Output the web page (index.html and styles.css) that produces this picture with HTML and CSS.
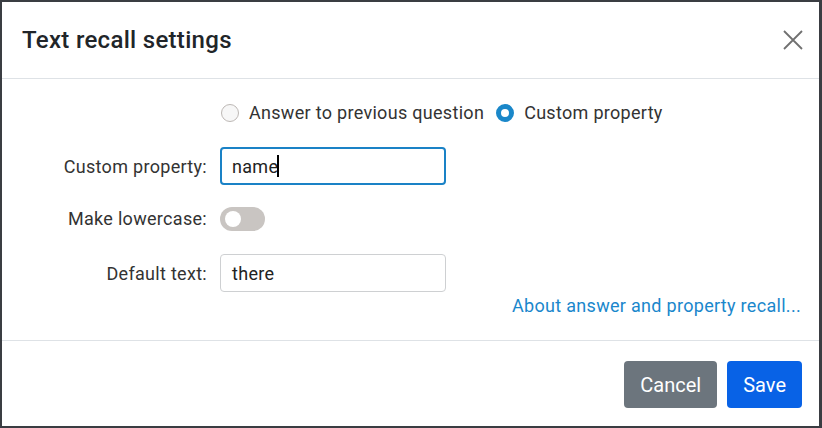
FILE: index.html
```html
<!DOCTYPE html>
<html lang="en">
<head>
<meta charset="utf-8">
<title>Text recall settings</title>
<link rel="stylesheet" href="styles.css">
</head>
<body>
<div class="modal">
  <div class="modal-header">
    <h5 class="modal-title">Text recall settings</h5>
    <button class="close-btn" type="button" aria-label="Close">
      <svg width="20" height="20" viewBox="0 0 20 20"><path d="M1 1 L19 19 M19 1 L1 19" stroke="#707070" stroke-width="1.8" fill="none"/></svg>
    </button>
  </div>
  <div class="modal-body">
    <div class="form-grid">
      <div class="row-radio">
        <label class="radio"><span class="radio-input"></span><span>Answer to previous question</span></label>
        <label class="radio"><span class="radio-input checked"></span><span>Custom property</span></label>
      </div>
      <label class="label row-prop">Custom property:</label>
      <div class="input focused row-prop">name<span class="caret"></span></div>
      <label class="label row-toggle">Make lowercase:</label>
      <div class="row-toggle"><span class="switch"><span class="knob"></span></span></div>
      <label class="label row-default">Default text:</label>
      <div class="input row-default">there</div>
    </div>
    <div class="link-row"><a class="link" href="#">About answer and property recall...</a></div>
  </div>
  <div class="modal-footer">
    <button class="btn btn-secondary" type="button">Cancel</button>
    <button class="btn btn-primary" type="button">Save</button>
  </div>
</div>
</body>
</html>
```

FILE: styles.css
```css
* { box-sizing: border-box; }
html, body { margin: 0; padding: 0; }
body {
  width: 822px;
  height: 428px;
  font-family: Roboto, "Liberation Sans", Arial, sans-serif;
  font-size: 18px;
  line-height: 27px;
  letter-spacing: 0.3px;
  color: #333;
  background: #3a3d42;
}
.modal {
  width: 822px;
  height: 428px;
  border: 2px solid #3a3d42;
  border-right-width: 3px;
  background: #fff;
  display: flex;
  flex-direction: column;
}
.modal-header {
  height: 77px;
  flex: none;
  border-bottom: 1px solid #dee2e6;
  display: flex;
  align-items: center;
  justify-content: space-between;
  padding: 0 16px 0 20px;
}
.modal-title {
  margin: 0;
  font-size: 24px;
  font-weight: 500;
  line-height: 30px;
  color: #212529;
}
.close-btn {
  border: 0;
  background: none;
  padding: 0;
  width: 20px;
  height: 20px;
  display: block;
}
.close-btn svg { display: block; }
.modal-body {
  flex: none;
  padding: 20px 18px 21px 20px;
  border-bottom: 1px solid #dee2e6;
}
.form-grid {
  display: grid;
  grid-template-columns: 185px 226px;
  column-gap: 13px;
  align-items: center;
}
.row-radio {
  grid-column: 2;
  display: flex;
  align-items: center;
  height: 27px;
  margin-bottom: 21px;
  white-space: nowrap;
}
.radio {
  display: flex;
  align-items: center;
  margin-right: 11px;
  flex: none;
}
.radio-input {
  width: 18px;
  height: 18px;
  border-radius: 50%;
  border: 1px solid #bdb8b5;
  background: #f7f7f7;
  margin: 0 10px 0 1px;
  flex: none;
}
.radio-input.checked {
  border: 5px solid #1a87c9;
  background: #fff;
}
.label {
  grid-column: 1;
  text-align: right;
  color: #333;
}
.input {
  grid-column: 2;
  height: 38px;
  border: 1px solid #ced0d2;
  border-radius: 4px;
  padding: 0 11px;
  display: flex;
  align-items: center;
  color: #222;
}
.input.focused {
  border: 2px solid #1a82c6;
  padding: 0 10px;
}
.caret {
  display: inline-block;
  width: 2px;
  height: 22px;
  background: #000;
  margin-left: -1px;
}
.row-prop { margin-bottom: 20px; }
.row-toggle { margin-bottom: 22px; height: 27px; }
div.row-toggle { display: flex; align-items: center; }
.switch {
  width: 45px;
  height: 24px;
  border-radius: 12px;
  background: #c9c5c2;
  display: flex;
  align-items: center;
  padding-left: 5px;
}
.knob {
  width: 16px;
  height: 16px;
  border-radius: 50%;
  background: #fff;
}
.link-row {
  display: flex;
  justify-content: flex-end;
  height: 27px;
  align-items: center;
}
.link {
  color: #1a87cc;
  text-decoration: none;
}
.modal-footer {
  flex: 1;
  display: flex;
  justify-content: flex-end;
  align-items: flex-start;
  gap: 10px;
  padding: 20px 17px 0 0;
}
.btn {
  height: 47px;
  border: 0;
  border-radius: 4px;
  font-family: inherit;
  font-size: 20px;
  letter-spacing: 0;
  padding: 0 16px;
  color: #fff;
}
.btn-secondary { background: #6c757d; }
.btn-primary { background: #0862e6; }
```
